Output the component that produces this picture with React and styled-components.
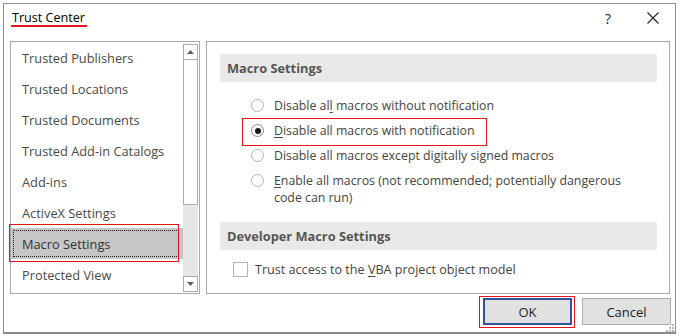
import React from "react";
import styled, { createGlobalStyle, css } from "styled-components";

const Global = createGlobalStyle`
  html, body { margin: 0; padding: 0; background: #ffffff; }
  body { font-family: "Open Sans", "Noto Sans", sans-serif; }
`;

const FONT = `"Open Sans", "Noto Sans", sans-serif`;
const RED = "#e3161f";

const Window = styled.div`
  position: relative;
  box-sizing: border-box;
  margin: 3px 0 0 3px;
  width: 673px;
  height: 331px;
  border: 1px solid #8e8e8e;
  border-bottom: 2px solid #8a8a8a;
  background: #ffffff;
  display: flex;
  flex-direction: column;
  font-family: ${FONT};
  font-size: 12.8px;
`;

const TitleBar = styled.div`
  height: 28px;
  display: flex;
  align-items: center;
  padding: 0 7px 0 8px;
`;

const TitleText = styled.span`
  position: relative;
  display: block;
  line-height: 16px;
  color: #000;
  font-size: 12.6px;
  &::after {
    content: "";
    position: absolute;
    left: -1px;
    top: 15px;
    width: 76px;
    height: 2px;
    background: ${RED};
  }
`;

const Controls = styled.div`
  margin-left: auto;
  display: flex;
  gap: 15px;
`;

const CtrlButton = styled.div`
  width: 30px;
  height: 22px;
  display: flex;
  align-items: center;
  justify-content: center;
  color: #222;
  font-size: 14px;
`;

const Body = styled.div`
  display: flex;
  gap: 6px;
  padding: 9px 5px 0 6px;
  height: 253px;
`;

const ListBox = styled.div`
  box-sizing: border-box;
  width: 190px;
  height: 253px;
  border: 1px solid #a9a9a9;
  display: flex;
`;

const Items = styled.div`
  flex: 1;
  display: flex;
  flex-direction: column;
`;

const Item = styled.div`
  position: relative;
  box-sizing: border-box;
  height: 31px;
  padding: 1px 0 0 11px;
  line-height: 31px;
  color: #4a4a4a;
  white-space: nowrap;
  ${(p) =>
    p.$selected &&
    css`
      background: #c6c6c6;
      color: #333;
      &::before {
        content: "";
        position: absolute;
        top: 2px;
        left: 2px;
        right: 4px;
        bottom: 2px;
        border: 1px dotted #202020;
      }
      &::after {
        content: "";
        position: absolute;
        top: -4px;
        left: -2px;
        right: 4px;
        bottom: -3px;
        border: 1px solid ${RED};
      }
    `}
`;

const ScrollBar = styled.div`
  width: 15px;
  margin: 2px 1px 1px 0;
  display: flex;
  flex-direction: column;
`;

const ArrowButton = styled.div`
  box-sizing: border-box;
  height: 16px;
  border: 1px solid #ababab;
  background: #fff;
  display: flex;
  align-items: center;
  justify-content: center;
`;

const Thumb = styled.div`
  box-sizing: border-box;
  height: 145px;
  border: 1px solid #ababab;
  border-top: none;
  background: #fff;
`;

const Track = styled.div`
  flex: 1;
  background: #e7e7e7;
`;

const Panel = styled.div`
  box-sizing: border-box;
  width: 464px;
  height: 253px;
  border: 1px solid #a9a9a9;
  padding: 12px 12px 0 13px;
  display: flex;
  flex-direction: column;
`;

const Band = styled.div`
  height: 28px;
  line-height: 28px;
  background: #e9e9e9;
  padding-left: 7px;
  font-weight: 700;
  color: #555;
  margin-top: ${(p) => p.$mt || 0}px;
`;

const Options = styled.div`
  margin-top: 11px;
  padding-left: 31px;
  display: flex;
  flex-direction: column;
  font-size: 12.35px;
`;

const Option = styled.div`
  position: relative;
  display: flex;
  align-items: flex-start;
  gap: 10px;
  padding: 4px 0;
  line-height: 17px;
  color: #444;
  ${(p) =>
    p.$highlight &&
    css`
      &::after {
        content: "";
        position: absolute;
        left: -9px;
        top: 0;
        width: 245px;
        height: 28px;
        box-sizing: border-box;
        border: 1px solid ${RED};
      }
    `}
`;

const Radio = styled.span`
  box-sizing: border-box;
  flex: none;
  width: 13px;
  height: 13px;
  margin-top: 2px;
  border-radius: 50%;
  border: 1px solid ${(p) => (p.$checked ? "#8c8c8c" : "#b4b4b4")};
  background: #fff;
  display: flex;
  align-items: center;
  justify-content: center;
  &::after {
    content: "";
    width: 6px;
    height: 6px;
    border-radius: 50%;
    background: ${(p) => (p.$checked ? "#1a1a1a" : "transparent")};
  }
`;

const Label = styled.span`
  white-space: nowrap;
`;

const CheckRow = styled.div`
  display: flex;
  align-items: center;
  gap: 7px;
  padding: 11px 0 0 13px;
  line-height: 17px;
  color: #444;
  font-size: 12.6px;
`;

const CheckBox = styled.span`
  box-sizing: border-box;
  width: 15px;
  height: 15px;
  border: 1px solid #b4b4b4;
  background: #fff;
`;

const U = styled.span`
  text-decoration: underline;
  text-underline-offset: 2px;
`;

const Footer = styled.div`
  flex: 1;
  display: flex;
  justify-content: flex-end;
  align-items: flex-start;
  gap: 10px;
  padding: 4px 4px 0 0;
`;

const Button = styled.button`
  position: relative;
  box-sizing: border-box;
  width: 89px;
  height: 27px;
  margin: 0;
  padding: 0;
  background: #e1e1e1;
  border: ${(p) => (p.$default ? "2px solid #2f5597" : "1px solid #adadad")};
  font-family: ${FONT};
  font-size: 13px;
  color: #1e1e1e;
  ${(p) =>
    p.$default &&
    css`
      &::after {
        content: "";
        position: absolute;
        left: -6px;
        top: -4px;
        right: -5px;
        bottom: -5px;
        border: 1px solid ${RED};
      }
    `}
`;

const Grip = styled.svg`
  position: absolute;
  right: 1px;
  bottom: 0px;
`;

const items = [
  "Trusted Publishers",
  "Trusted Locations",
  "Trusted Documents",
  "Trusted Add-in Catalogs",
  "Add-ins",
  "ActiveX Settings",
  "Macro Settings",
  "Protected View",
];

export default function App() {
  return (
    <>
      <Global />
      <Window>
        <TitleBar>
          <TitleText>Trust Center</TitleText>
          <Controls>
            <CtrlButton>?</CtrlButton>
            <CtrlButton>
              <svg width="12" height="12" viewBox="0 0 12 12">
                <path d="M0.5 0.5 L11.5 11.5 M11.5 0.5 L0.5 11.5" stroke="#222" strokeWidth="1.1" fill="none" />
              </svg>
            </CtrlButton>
          </Controls>
        </TitleBar>
        <Body>
          <ListBox>
            <Items>
              {items.map((t) => (
                <Item key={t} $selected={t === "Macro Settings"}>
                  {t}
                </Item>
              ))}
            </Items>
            <ScrollBar>
              <ArrowButton>
                <svg width="7" height="4" viewBox="0 0 7 4">
                  <path d="M3.5 0 L7 4 L0 4 Z" fill="#606060" />
                </svg>
              </ArrowButton>
              <Thumb />
              <Track />
              <ArrowButton>
                <svg width="7" height="4" viewBox="0 0 7 4">
                  <path d="M0 0 L7 0 L3.5 4 Z" fill="#606060" />
                </svg>
              </ArrowButton>
            </ScrollBar>
          </ListBox>
          <Panel>
            <Band>Macro Settings</Band>
            <Options>
              <Option>
                <Radio />
                <Label>
                  Disable al<U>l</U> macros without notification
                </Label>
              </Option>
              <Option $highlight>
                <Radio $checked />
                <Label>
                  <U>D</U>isable all macros with notification
                </Label>
              </Option>
              <Option>
                <Radio />
                <Label>
                  Disable all macros except di<U>g</U>itally signed macros
                </Label>
              </Option>
              <Option>
                <Radio />
                <Label>
                  <U>E</U>nable all macros (not recommended; potentially dangerous
                  <br />
                  code can run)
                </Label>
              </Option>
            </Options>
            <Band $mt={12}>Developer Macro Settings</Band>
            <CheckRow>
              <CheckBox />
              <span>
                Trust access to the <U>V</U>BA project object model
              </span>
            </CheckRow>
          </Panel>
        </Body>
        <Footer>
          <Button $default>OK</Button>
          <Button>Cancel</Button>
        </Footer>
        <Grip width="9" height="9" viewBox="0 0 9 9">
          <rect x="7" y="1" width="2" height="2" fill="#b8b8b8" />
          <rect x="4" y="4" width="2" height="2" fill="#b8b8b8" />
          <rect x="7" y="4" width="2" height="2" fill="#b8b8b8" />
          <rect x="1" y="7" width="2" height="2" fill="#b8b8b8" />
          <rect x="4" y="7" width="2" height="2" fill="#b8b8b8" />
          <rect x="7" y="7" width="2" height="2" fill="#b8b8b8" />
        </Grip>
      </Window>
    </>
  );
}
